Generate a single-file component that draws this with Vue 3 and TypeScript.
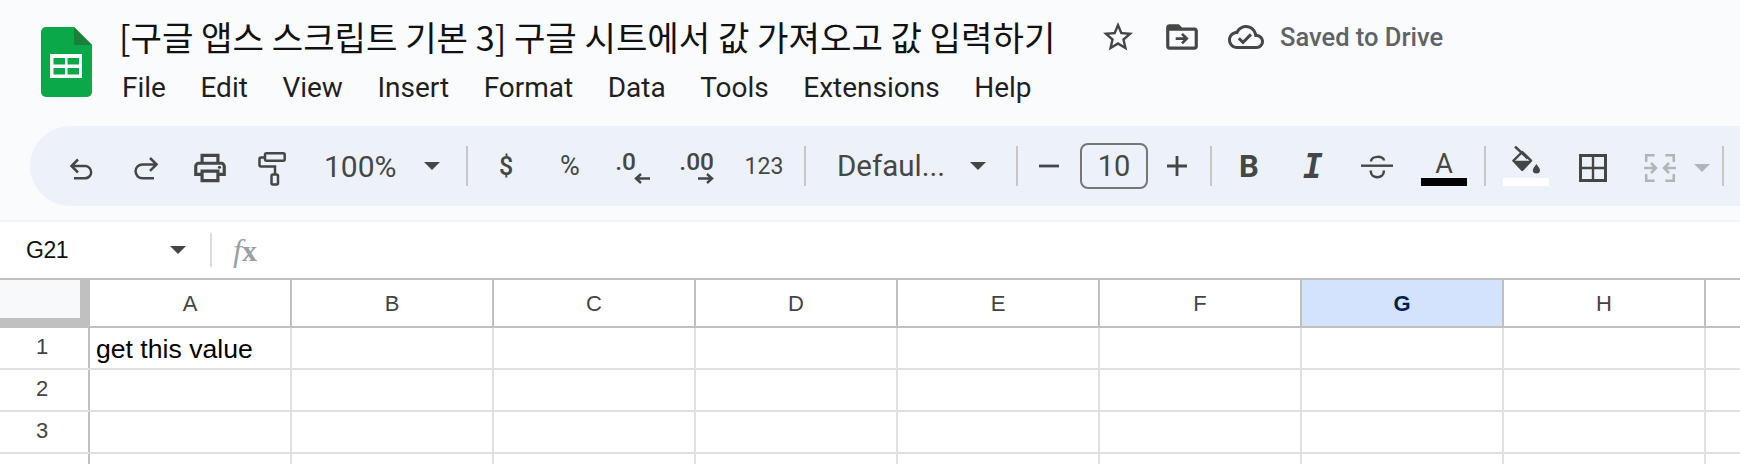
<script setup lang="ts">
const menus: string[] = ['File', 'Edit', 'View', 'Insert', 'Format', 'Data', 'Tools', 'Extensions', 'Help']
const cols: string[] = ['A', 'B', 'C', 'D', 'E', 'F', 'G', 'H', '']
const rows: string[] = ['1', '2', '3', '']
</script>

<template>
  <div class="app">
    <header class="top">
      <svg class="logo" width="51" height="70" viewBox="0 0 51 70">
        <path d="M5 0H33L51 18V65a5 5 0 0 1-5 5H5a5 5 0 0 1-5-5V5a5 5 0 0 1 5-5Z" fill="#0ba84a" />
        <path d="M33 0L51 18H33Z" fill="#188038" />
        <path d="M9 27H41V51H9Z" fill="#fff" />
        <path d="M12.500 31H24V37.500H12.500ZM26.500 31H38V37.500H26.500ZM12.500 41H24V47.500H12.500ZM26.500 41H38V47.500H26.500Z" fill="#0ba84a" />
      </svg>
      <div class="titles">
        <div class="title-row">
          <h1 class="title">[구글 앱스 스크립트 기본 3] 구글 시트에서 값 가져오고 값 입력하기</h1>
          <svg class="star" width="36" height="36" viewBox="0 0 24 24"><path fill="#444746" d="M22 9.24l-7.19-.62L12 2 9.19 8.63 2 9.24l5.46 4.73L5.82 21 12 17.27 18.18 21l-1.63-7.03L22 9.24zM12 15.4l-3.76 2.27 1-4.28-3.32-2.88 4.38-.38L12 6.1l1.71 4.04 4.38.38-3.32 2.88 1 4.28L12 15.4z" /></svg>
          <svg class="move" width="38" height="38" viewBox="0 0 24 24"><path fill="#444746" d="M20 6h-8l-2-2H4c-1.1 0-2 .9-2 2v12c0 1.1.9 2 2 2h16c1.1 0 2-.9 2-2V8c0-1.1-.9-2-2-2zm0 12H4V8h16v10z" /><path d="M8 13h7M12 10l3 3-3 3" fill="none" stroke="#444746" stroke-width="1.7" /></svg>
          <svg class="cloud" width="36" height="36" viewBox="0 0 24 24"><path fill="#444746" d="M19.35 10.04C18.67 6.59 15.64 4 12 4 9.11 4 6.6 5.64 5.35 8.04 2.34 8.36 0 10.91 0 14c0 3.31 2.69 6 6 6h13c2.76 0 5-2.24 5-5 0-2.64-2.05-4.78-4.65-4.96zM19 18H6c-2.21 0-4-1.79-4-4 0-2.05 1.53-3.76 3.56-3.97l1.07-.11.5-.95C8.08 7.14 9.94 6 12 6c2.62 0 4.88 1.86 5.39 4.43l.3 1.5 1.53.11c1.56.1 2.78 1.41 2.78 2.96 0 1.65-1.35 3-3 3zm-9-3.82l-2.09-2.09L6.5 13.5 10 17l6.01-6.01-1.41-1.41z" /></svg>
          <span class="saved">Saved to Drive</span>
        </div>
        <nav class="menu"><span v-for="m in menus" :key="m">{{ m }}</span></nav>
      </div>
    </header>

    <div class="toolbar">
      <button class="btn low"><svg width="24" height="24" viewBox="0 0 24 24"><path class="ln" d="M8 3.500L1.500 10L8 16.500M1.500 10H15a6.150 6.150 0 0 1 0 12.300H4" /></svg></button>
      <button class="btn low"><svg width="24" height="24" viewBox="0 0 24 24"><path class="ln" d="M16 2L22.500 8.400L16 14.800M22.500 8.400H8.500a6.950 6.950 0 0 0 0 13.900H20" /></svg></button>
      <button class="btn low"><svg width="38" height="38" viewBox="0 0 24 24"><path fill="#444746" d="M19 8h-1V3H6v5H5c-1.66 0-3 1.34-3 3v6h4v4h12v-4h4v-6c0-1.66-1.34-3-3-3zM8 5h8v3H8V5zm8 12v2H8v-4h8v2zm2-2v-2H6v2H4v-4c0-.55.45-1 1-1h14c.55 0 1 .45 1 1v4h-2z" /><circle cx="18" cy="11.5" r="1" fill="#444746" /></svg></button>
      <button class="btn roller"><svg width="28" height="34" viewBox="0 0 28 34"><g class="ln"><rect x="7" y="1.300" width="19.700" height="7.400" rx="1.500" /><path d="M6 5.500H3A1.500 1.500 0 0 0 1.500 7V13A1.500 1.500 0 0 0 3 14.500H17V22" /><rect x="13.500" y="22.500" width="6.500" height="10" rx="1.500" /></g></svg></button>
      <div class="zoom"><span>100%</span><i class="caret" /></div>
      <i class="sep s1" />
      <button class="btn txt dollar">$</button>
      <button class="btn txt">%</button>
      <button class="btn dec"><span class="d1">.0</span><svg width="16" height="11" viewBox="0 0 16 11"><path class="ln2" d="M16 5.500H2M7 1L2 5.500l5 4.500" /></svg></button>
      <button class="btn dec"><span>.00</span><svg width="16" height="11" viewBox="0 0 16 11"><path class="ln2" d="M0 5.500H14M9 1L14 5.500l-5 4.500" /></svg></button>
      <button class="btn num">123</button>
      <i class="sep s2" />
      <div class="font"><span>Defaul...</span><i class="caret" /></div>
      <i class="sep" />
      <button class="btn minus"><svg width="20" height="4" viewBox="0 0 20 4"><path d="M0 2H20" stroke="#444746" stroke-width="2.800" /></svg></button>
      <div class="size">10</div>
      <button class="btn plus"><svg width="20" height="20" viewBox="0 0 20 20"><path d="M0 10H20M10 0V20" stroke="#444746" stroke-width="2.800" /></svg></button>
      <i class="sep s3" />
      <button class="btn bold">B</button>
      <button class="btn ital">I</button>
      <button class="btn"><svg width="32" height="26" viewBox="0 0 32 26"><g class="ln"><path d="M0 12.700H32" stroke-width="2.400" /><path d="M10 8.500C10 2.500 22.500 2.500 23 7.500" /><path d="M9.800 17.500v1c0 7.500 13 7.500 13 0v-1" /></g></svg></button>
      <button class="btn color"><span>A</span><i class="bar black" /></button>
      <i class="sep s4" />
      <button class="btn color fill"><svg width="28" height="28" viewBox="0 0 28 28"><path d="M3 0.500L15.700 12.500" stroke="#444746" stroke-width="2.500" fill="none" /><path d="M10.200 6L19 14.700L10.200 24L1.500 14.700Z" stroke="#444746" stroke-width="2.400" fill="none" stroke-linejoin="round" /><path d="M1.500 14.700H19L10.200 24Z" fill="#444746" /><path d="M24.400 18c2 3 3.600 4.600 3.600 6a3.600 3.600 0 0 1-7.200 0c0-1.400 1.600-3 3.600-6Z" fill="#444746" /></svg><i class="bar white" /></button>
      <button class="btn borders"><svg width="28" height="28" viewBox="0 0 28 28"><path d="M1.500 1.500H26.500V26.500H1.500Z" fill="none" stroke="#444746" stroke-width="3" /><path d="M14 1.500V26.500M1.500 14H26.500" fill="none" stroke="#444746" stroke-width="2.400" /></svg></button>
      <div class="merge">
        <svg width="32" height="28" viewBox="0 0 32 28"><path d="M10.700 1.300H2.200V8M2.200 20V26.700H10.700M21.300 1.300H29.800V8M29.800 20V26.700H21.300M0 14H11.500M7 9L12 14L7 19M32 14H20.500M25 9L20 14L25 19" fill="none" stroke="#b1b5b9" stroke-width="2.500" /></svg>
        <i class="caret off" />
      </div>
      <i class="sep s5" />
    </div>

    <div class="formula">
      <span class="ref">G21</span>
      <i class="caret" />
      <i class="fsep" />
      <span class="fx"><em>f</em><b>x</b></span>
    </div>

    <div class="sheet">
      <div class="head">
        <div class="corner"><div class="corner-in" /></div>
        <div v-for="c in cols" :key="'h' + c" class="hcell" :class="{ active: c === 'G', last: c === '' }">{{ c }}</div>
      </div>
      <div v-for="r in rows" :key="'r' + r" class="row">
        <div class="rnum">{{ r }}</div>
        <div v-for="c in cols" :key="r + c" class="cell" :class="{ last: c === '' }">{{ r === '1' && c === 'A' ? 'get this value' : '' }}</div>
      </div>
    </div>
  </div>
</template>

<style>
html, body { margin: 0; background: #f9fbfd; }
</style>

<style scoped>
.app { width: 1740px; height: 464px; overflow: hidden; background: #f9fbfd; font-family: Roboto, "Noto Sans CJK KR", sans-serif; display: flex; flex-direction: column; }
.top { height: 126px; flex: none; display: flex; box-sizing: border-box; padding: 27px 0 0 41px; }
.logo { display: block; flex: none; }
.titles { margin-left: 30px; display: flex; flex-direction: column; margin-top: -27px; }
.title-row { height: 73px; display: flex; align-items: center; }
.title { margin: 0 0 0 -3px; font: 400 34.200px/1 "Noto Sans CJK KR", Roboto, sans-serif; color: #111; width: 981px; white-space: nowrap; }
.star { flex: none; }
.move { margin-left: 27px; flex: none; }
.cloud { margin-left: 27px; flex: none; }
.saved { margin-left: 16px; font-size: 25.500px; font-weight: 500; color: #5f6368; }
.menu { display: flex; gap: 34.500px; font-size: 28px; color: #1f1f1f; line-height: 30px; }

.toolbar { height: 80px; margin-left: 30px; flex: none; background: #edf2fa; border-radius: 40px 0 0 40px; padding-left: 20px; display: flex; align-items: center; color: #444746; }
.btn { width: 64px; height: 80px; padding: 0; border: 0; background: none; flex: none; display: flex; align-items: center; justify-content: center; color: #444746; font-family: Roboto, sans-serif; }
.low svg { margin-top: 4px; }
.roller svg { margin: 6px 4px 0 0; }
.ln { fill: none; stroke: #444746; stroke-width: 2.500; }
.ln2 { fill: none; stroke: #444746; stroke-width: 2.400; }
.zoom { width: 152px; flex: none; box-sizing: border-box; padding-left: 18px; display: flex; align-items: center; font-size: 30px; }
.zoom span { width: 100px; }
.caret { display: block; flex: none; width: 0; height: 0; border-left: 8px solid transparent; border-right: 8px solid transparent; border-top: 8px solid #444746; }
.caret.off { border-top-color: #b1b5b9; margin: 4px 0 0 18px; }
.sep { display: block; width: 2px; height: 40px; background: #c7c7c7; flex: none; }
.s1 { margin: 0 6px 0 8px; }
.s2 { margin-left: 10px; }
.s3 { margin: 0 5px 0 4px; }
.s4 { margin: 0 8px 0 11px; }
.s5 { margin-left: 11px; }
.txt { font-size: 27px; }
.dollar { font-size: 25px; font-weight: 500; }
.dec { flex-direction: column; align-items: flex-end; padding: 2px 16px 0 0; font-size: 24.500px; font-weight: 500; }
.dec span { display: block; height: 22px; line-height: 22px; }
.dec svg { display: block; }
.d1 { margin-right: 14px; }
.num { font-size: 23px; padding-left: 4px; }
.font { width: 210px; flex: none; box-sizing: border-box; padding-left: 31px; display: flex; align-items: center; font-size: 29.500px; }
.font span { width: 133px; white-space: nowrap; }
.minus { width: 62px; }
.size { width: 68px; height: 46px; box-sizing: border-box; border: 2px solid #747775; border-radius: 8px; flex: none; font-size: 29px; display: flex; align-items: center; justify-content: center; }
.plus { width: 58px; }
.bold { font-size: 31px; font-weight: 700; }
.ital { font: italic 700 33px "DejaVu Sans Mono", monospace; }
.color { flex-direction: column; justify-content: flex-start; font-size: 27px; }
.color span { height: 32px; margin-top: 22px; line-height: 32px; margin-left: 6px; }
.bar { display: block; width: 46px; height: 8px; flex: none; margin-left: 6px; }
.black { background: #000; margin-top: -2px; }
.white { background: #fff; margin-top: 4px; margin-left: 0; }
.fill svg { margin-top: 20px; }
.borders { margin-left: 3px; }
.borders svg { margin-top: 4px; }
.merge { width: 84px; flex: none; margin-left: 2px; display: flex; align-items: center; box-sizing: border-box; padding-left: 17px; }
.merge svg { margin-top: 4px; flex: none; }

.formula { height: 56px; flex: none; margin-top: 14px; background: #fff; border-top: 2px solid #f3f4f5; display: flex; align-items: center; }
.ref { margin-left: 26px; font: 400 23px "Liberation Sans", sans-serif; color: #111; width: 144px; letter-spacing: -0.500px; flex: none; }
.fsep { display: block; width: 2px; height: 34px; background: #dadce0; margin-left: 24px; }
.fx { margin-left: 21px; font: 32px "Liberation Serif", serif; color: #9aa0a6; line-height: 1; }
.fx em { font-style: italic; }
.fx b { font-weight: 700; font-size: 30px; }

.sheet { flex: 1; background: #fff; border-top: 2px solid #c0c0c0; font-family: "Liberation Sans", sans-serif; }
.head { display: flex; height: 46px; border-bottom: 2px solid #c0c0c0; }
.corner { width: 90px; height: 46px; background: #c0c0c0; flex: none; }
.corner-in { width: 80px; height: 38px; background: #f8f9fa; }
.hcell { width: 202px; flex: none; box-sizing: border-box; border-right: 2px solid #c0c0c0; display: flex; align-items: center; justify-content: center; font-size: 22px; color: #444; padding-top: 1px; }
.hcell.active { background: #d3e3fd; color: #041e49; font-weight: 700; }
.hcell.last { border-right: 0; }
.row { display: flex; height: 42px; box-sizing: border-box; border-bottom: 2px solid #e0e0e0; }
.rnum { width: 90px; box-sizing: border-box; flex: none; border-right: 2px solid #c0c0c0; text-align: center; font-size: 22px; line-height: 38px; color: #444; padding-right: 4px; }
.cell { width: 202px; flex: none; box-sizing: border-box; border-right: 2px solid #e0e0e0; padding-left: 6px; font-size: 26.600px; line-height: 43px; color: #000; white-space: nowrap; }
.cell.last { border-right: 0; }
</style>
